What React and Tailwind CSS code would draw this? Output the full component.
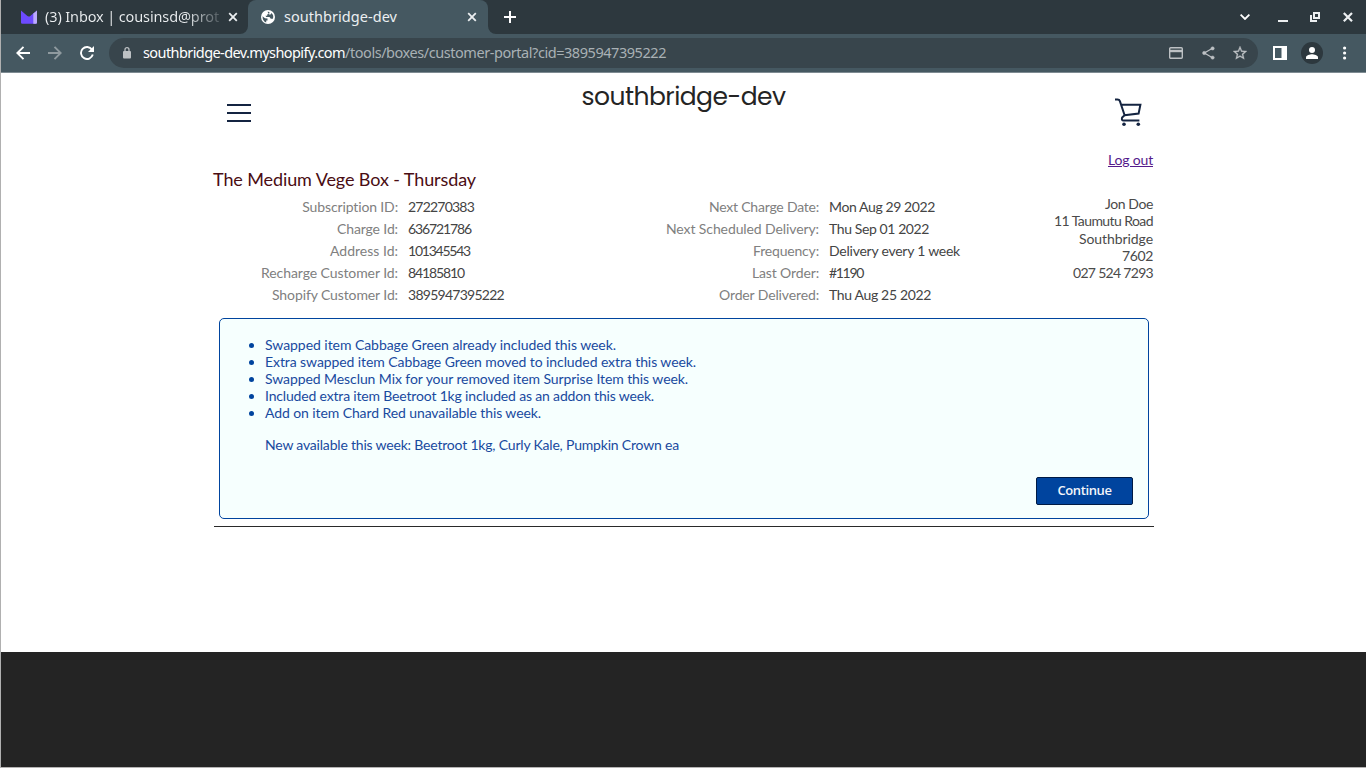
import { useLayoutEffect, useRef } from "react";

// Spreads a single line of text over a given width by adjusting its tracking.
function Line({ w, className = "", children }) {
  const ref = useRef(null);
  useLayoutEffect(() => {
    const el = ref.current;
    const fit = () => {
      el.style.letterSpacing = "0px";
      const natural = el.getBoundingClientRect().width;
      const extra = (w - natural) / el.textContent.length;
      el.style.letterSpacing = `${extra}px`;
    };
    fit();
    document.fonts?.ready.then(fit);
  }, [w]);
  return (
    <span ref={ref} className={`inline-block whitespace-nowrap ${className}`}>
      {children}
    </span>
  );
}

function Close({ className = "" }) {
  return (
    <svg className={`h-[10px] w-[10px] shrink-0 ${className}`} viewBox="0 0 10 10" fill="none" stroke="currentColor" strokeWidth="1.8">
      <path d="M1.2 1.2 8.8 8.8M8.8 1.2 1.2 8.8" />
    </svg>
  );
}

function TabStrip() {
  return (
    <div className="flex h-[34px] items-stretch bg-[#2d383e] text-[14.5px] text-[#eceff1]">
      <div className="flex w-[247px] items-center pl-5">
        <svg className="h-[14px] w-4 shrink-0" viewBox="0 0 16 14">
          <path d="M0 .4 6.4 6 8 7 16 .4V12.5a1.2 1.2 0 0 1-1.2 1.2H1.2A1.2 1.2 0 0 1 0 12.5Z" fill="#6d4aff" />
          <path d="M0 .4 6.4 6Q8 7.2 9.3 6L12.3 3.4V13.7H14.8A1.2 1.2 0 0 0 16 12.5V.4L8.7 6.5Q7.8 7.1 7 6.5Z" fill="#bcabfb" />
        </svg>
        <div className="ml-2 w-[175px] overflow-hidden bg-gradient-to-r from-[#eceff1] from-80% to-[#2d383e] to-105% bg-clip-text pb-[3px] leading-5 text-transparent">
          <Line w={174}>(3) Inbox | cousinsd@prot</Line>
        </div>
        <Close className="ml-[8px]" />
      </div>
      <div className="relative flex w-[240px] items-center rounded-t-lg bg-[#455861] pl-[13px]">
        <svg className="absolute bottom-0 -left-2 h-2 w-2" viewBox="0 0 8 8" fill="#455861">
          <path d="M8 0V8H0A8 8 0 0 0 8 0Z" />
        </svg>
        <svg className="absolute -right-2 bottom-0 h-2 w-2" viewBox="0 0 8 8" fill="#455861">
          <path d="M0 0V8H8A8 8 0 0 1 0 0Z" />
        </svg>
        <svg className="h-[14px] w-[14px] shrink-0" viewBox="0 0 14 14">
          <circle cx="7" cy="7" r="7" fill="#fff" />
          <path d="M1.5 6.2 4 8.2 6.5 8.6V10.4H5.2V12.4Q1.6 11.3 1.5 6.2ZM6.5 1.8Q9 1.2 8.5 3.2L6.2 4.4V5.8H4.4L5.3 7H8.5L9.8 8.7H11.9Q13.1 5.5 10.4 3.1L9.6 4.6H8Z" fill="#455861" />
        </svg>
        <Line w={113} className="ml-[9px] pb-[3px] leading-5">southbridge-dev</Line>
        <Close className="ml-[70px]" />
      </div>
      <div className="flex flex-1 items-center pl-4">
        <svg className="h-3 w-3" viewBox="0 0 12 12" stroke="#fff" strokeWidth="2">
          <path d="M6 0V12M0 6H12" />
        </svg>
        <svg className="mr-[32px] ml-auto h-[6px] w-[10px]" viewBox="0 0 10 6" fill="none" stroke="#fff" strokeWidth="1.8">
          <path d="M.6 .6 5 5 9.4 .6" />
        </svg>
        <svg className="mr-[14px] h-3 w-[70px] overflow-visible" viewBox="0 -1 70 12" fill="none" stroke="#eceff1">
          <path d="M-4 9H6" strokeWidth="2" />
          <path d="M29 3V9H35M32 1H37V6H32Z" strokeWidth="2" />
          <path d="M61.8 1 70 9.200M70 1 61.800 9.200" strokeWidth="2.2" />
        </svg>
      </div>
    </div>
  );
}

function Toolbar() {
  return (
    <div className="flex h-[39px] items-center border-b border-[#7e8b92] bg-[#455861] pl-[15px]">
      <svg className="h-[14px] w-[14px] shrink-0" viewBox="0 0 14 14" fill="none" stroke="#fff" strokeWidth="1.9">
        <path d="M14 7H1.5M7.5 .8 1.3 7l6.2 6.2" />
      </svg>
      <svg className="ml-[18px] h-[14px] w-[14px] shrink-0" viewBox="0 0 14 14" fill="none" stroke="#8f9a9f" strokeWidth="1.9">
        <path d="M0 7H12.5M6.5 .8 12.7 7l-6.2 6.2" />
      </svg>
      <svg className="ml-[18px] h-[14px] w-[14px] shrink-0" viewBox="0 0 14 14" fill="none" stroke="#fff" strokeWidth="1.9">
        <path d="M12 3.6A6 6 0 1 0 12.8 8.6" />
        <path d="M14 0V6H8Z" fill="#fff" stroke="none" />
      </svg>
      <div className="ml-[15px] flex h-[30px] w-[1149px] shrink-0 items-center rounded-full bg-[#38454c] pl-[14px] text-[14.5px]">
        <svg className="h-3 w-2 shrink-0" viewBox="0 0 8 12">
          <rect y="4" width="8" height="7.5" rx="1" fill="#bdc1c4" />
          <path d="M2 4.5V2.7A2 2 0 0 1 6 2.7V4.5" fill="none" stroke="#bdc1c4" strokeWidth="1.3" />
        </svg>
        <Line w={202} className="ml-3 pb-[2px] leading-5 text-white">southbridge-dev.myshopify.com</Line>
        <Line w={321} className="pb-[2px] leading-5 text-[#a9b1b5]">/tools/boxes/customer-portal?cid=3895947395222</Line>
        <div className="mr-[11px] ml-auto flex items-center gap-[18px]">
          <svg className="-ml-px h-3 w-[14px]" viewBox="0 0 14 12" fill="none" stroke="#bdc1c4" strokeWidth="1.4">
            <rect x=".7" y=".7" width="12.6" height="10.6" rx="1" />
            <path d="M1 4H13" strokeWidth="2.4" />
          </svg>
          <svg className="ml-px h-[14px] w-[13px]" viewBox="0 0 13 14" fill="#bdc1c4" stroke="#bdc1c4" strokeWidth=".4">
            <path d="M10.5 2.3 2.3 7 10.5 11.7" fill="none" strokeWidth="1.2" />
            <circle cx="10.6" cy="2.4" r="1.7" /><circle cx="2.2" cy="7" r="1.7" /><circle cx="10.6" cy="11.6" r="1.7" />
          </svg>
          <svg className="h-[14px] w-[14px]" viewBox="2 2 20 20" fill="#bdc1c4" stroke="#bdc1c4" strokeWidth=".4">
            <path d="m22 9.24-7.19-.62L12 2 9.19 8.63 2 9.24l5.46 4.73L5.82 21 12 17.27 18.18 21l-1.63-7.03L22 9.24zM12 15.4l-3.76 2.27 1-4.28-3.32-2.88 4.38-.38L12 6.1l1.71 4.04 4.38.38-3.32 2.88 1 4.28L12 15.4z" />
          </svg>
        </div>
      </div>
      <svg className="ml-[15px] h-[14px] w-[14px] shrink-0" viewBox="0 0 14 14">
        <path d="M0 0H14V14H0ZM2 2V12H8.5V2Z" fill="#fff" fillRule="evenodd" />
      </svg>
      <svg className="ml-[14px] h-[22px] w-[22px] shrink-0" viewBox="0 0 22 22">
        <circle cx="11" cy="11" r="11" fill="#2d383e" />
        <circle cx="11" cy="8" r="3" fill="#fff" />
        <path d="M5 17V15.3C5 13.3 9 12.3 11 12.3S17 13.3 17 15.3V17Z" fill="#fff" />
      </svg>
      <svg className="ml-5 h-[14px] w-1 shrink-0" viewBox="0 0 4 14" fill="#fff">
        <circle cx="1.6" cy="2" r="1.6" /><circle cx="1.6" cy="7" r="1.6" /><circle cx="1.6" cy="12" r="1.6" />
      </svg>
    </div>
  );
}

const ids = [
  ["Subscription ID:", 96, "272270383", 66],
  ["Charge Id:", 61, "636721786", 63],
  ["Address Id:", 68, "101345543", 62],
  ["Recharge Customer Id:", 137, "84185810", 56],
  ["Shopify Customer Id:", 126, "3895947395222", 96],
];

const schedule = [
  ["Next Charge Date:", 110, "Mon Aug 29 2022", 106],
  ["Next Scheduled Delivery:", 153, "Thu Sep 01 2022", 100],
  ["Frequency:", 66, "Delivery every 1 week", 131],
  ["Last Order:", 67, "#1190", 34],
  ["Order Delivered:", 100, "Thu Aug 25 2022", 102],
];

const address = [
  ["Jon Doe", 48],
  ["11 Taumutu Road", 99],
  ["Southbridge", 74],
  ["7602", 31],
  ["027 524 7293", 80],
];

const messages = [
  ["Swapped item Cabbage Green already included this week.", 351],
  ["Extra swapped item Cabbage Green moved to included extra this week.", 431],
  ["Swapped Mesclun Mix for your removed item Surprise Item this week.", 423],
  ["Included extra item Beetroot 1kg included as an addon this week.", 389],
  ["Add on item Chard Red unavailable this week.", 276],
];

function Details({ rows, className }) {
  return (
    <dl className={className}>
      {rows.map(([label, lw, value, vw]) => (
        <div key={label} className="flex h-[22px] items-center">
          <dt className="flex w-[186px] justify-end text-[#808080]"><Line w={lw}>{label}</Line></dt>
          <dd className="ml-[10px] text-[#444444]"><Line w={vw}>{value}</Line></dd>
        </div>
      ))}
    </dl>
  );
}

function Portal() {
  return (
    <main className="ml-[212px] w-[941px] font-['Lato','Open_Sans',sans-serif] text-[14px] leading-[17px]">
      <header className="flex h-[78px] items-start justify-between pr-[12px] pl-[14px]">
        <svg className="mt-[31px] h-[18px] w-6" viewBox="0 0 24 18" stroke="#142441" strokeWidth="2">
          <path d="M0 1H24M0 9H24M0 17H24" />
        </svg>
        <h1 className="-mr-px pt-[8px] font-['Poppins','Inter',sans-serif] text-[25px] leading-8 text-[#242424]">
          <Line w={204}>southbridge-dev</Line>
        </h1>
        <svg className="mt-[25px] h-[28px] w-[27px]" viewBox="0 0 27 28" fill="none" stroke="#142441" strokeWidth="2">
          <path d="M0 1.5H2.5Q4.3 1.5 4.9 3.2L9.6 17.2M5.9 6.8H25.4L23.6 15.6 9.6 17.2 7.1 19.5Q6.2 22.6 8.6 22.6H24.4" />
          <circle cx="9" cy="26.2" r="1.8" fill="#142441" stroke="none" /><circle cx="23.3" cy="26.2" r="1.8" fill="#142441" stroke="none" />
        </svg>
      </header>
      <div className="flex h-[17px] justify-end pr-px text-[#551a8b]">
        <a href="#logout"><Line w={45} className="underline">Log out</Line></a>
      </div>
      <h2 className="flex h-[26px] items-center pb-[4px] text-[18px] leading-[22px] text-[#4a0d13]"><Line w={263}>The Medium Vege Box - Thursday</Line></h2>
      <div className="flex h-[124px] items-start">
        <Details rows={ids} className="-ml-px w-[421px] pt-px" />
        <Details rows={schedule} className="w-[400px] pt-px" />
        <div className="flex flex-1 flex-col items-end pt-px pr-px text-[#4a4a4a]">
          {address.map(([text, w]) => (
            <Line key={text} w={w} className="h-[17.3px]">{text}</Line>
          ))}
        </div>
      </div>
      <section className="mx-[6px] flex h-[201px] w-[930px] flex-col rounded-[5px] border border-[#00449e] bg-[#f6fffe] pt-[17px] text-[#194a9f]">
        <ul className="list-disc pl-[45px] marker:text-[#00449e]">
          {messages.map(([text, w]) => (
            <li key={text} className="h-[17px]"><Line w={w}>{text}</Line></li>
          ))}
        </ul>
        <p className="mt-[15px] pl-[45px]">
          <Line w={414}>New available this week: Beetroot 1kg, Curly Kale, Pumpkin Crown ea</Line>
        </p>
        <button className="mt-[24px] mr-[15px] flex h-[28px] w-[97px] items-center justify-center self-end rounded-xs border border-[#001b44] bg-[#00449e] pb-[2px] font-['Open_Sans',sans-serif] text-[13px] font-semibold text-[#f3f5fa]">
          <Line w={54}>Continue</Line>
        </button>
      </section>
      <div className="mt-[7px] ml-px border-t border-[#2a2a2a]" />
    </main>
  );
}

export default function App() {
  return (
    <div className="flex h-[768px] w-[1366px] flex-col overflow-hidden border-b border-l border-b-[#b5b3b3] border-l-[#b0b0b0] bg-white font-['Noto_Sans',sans-serif]">
      <TabStrip />
      <Toolbar />
      <div className="h-[579px]"><Portal /></div>
      <footer className="flex-1 bg-[#242424]" />
    </div>
  );
}
